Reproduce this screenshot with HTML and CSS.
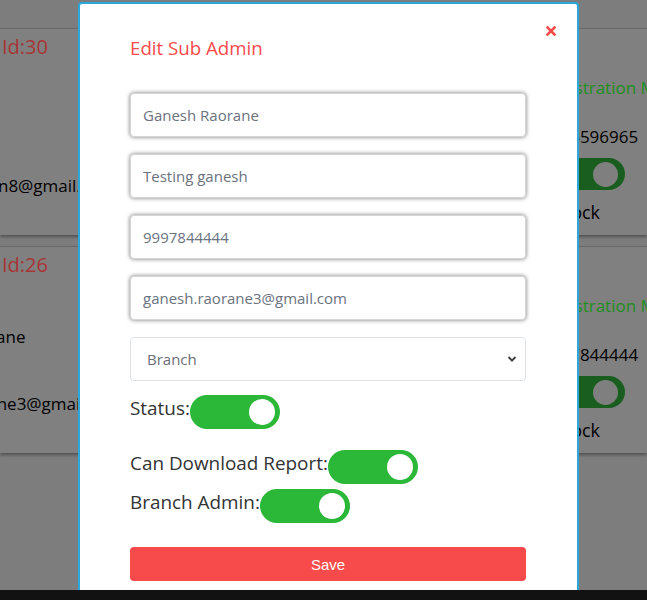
FILE: index.html
```html
<!DOCTYPE html>
<html>
<head>
<meta charset="utf-8">
<title>Edit Sub Admin</title>
<link rel="stylesheet" href="styles.css">
</head>
<body>
<div class="page">
  <div class="card">
    <div class="card-left">
      <div class="card-id">Id:30</div>
      <div class="card-line name"></div>
      <div class="card-line email"><span class="shift">chavan8@gmail.com</span></div>
    </div>
    <div class="card-right">
      <div class="card-mode">Registration Mobile</div>
      <div class="card-phone">9876596965</div>
      <div class="card-toggle"><span class="card-knob"></span></div>
      <div class="card-block">Block</div>
    </div>
  </div>
  <div class="card">
    <div class="card-left">
      <div class="card-id">Id:26</div>
      <div class="card-line name"><span class="shift2">Raorane</span></div>
      <div class="card-line email"><span class="shift3">ganesh.raorane3@gmail.com</span></div>
    </div>
    <div class="card-right">
      <div class="card-mode">Registration Mobile</div>
      <div class="card-phone">9997844444</div>
      <div class="card-toggle"><span class="card-knob"></span></div>
      <div class="card-block">Block</div>
    </div>
  </div>
</div>

<div class="modal">
  <button class="close" aria-label="Close">
    <svg width="10" height="10" viewBox="0 0 10 10"><path d="M1.5 1.5 L8.5 8.5 M8.5 1.5 L1.5 8.5" stroke="#f74a4a" stroke-width="2.6" stroke-linecap="square"/></svg>
  </button>
  <h2 class="title">Edit Sub Admin</h2>
  <form class="form">
    <input class="field" type="text" value="Ganesh Raorane">
    <input class="field" type="text" value="Testing ganesh">
    <input class="field" type="text" value="9997844444">
    <input class="field" type="text" value="ganesh.raorane3@gmail.com">
    <div class="select">
      <span>Branch</span>
      <svg width="10" height="8" viewBox="0 0 10 8"><path d="M1.5 2 L5 5.5 L8.5 2" fill="none" stroke="#444" stroke-width="2"/></svg>
    </div>
    <div class="switch-row first"><span class="label">Status:</span><span class="toggle"><span class="knob"></span></span></div>
    <div class="switch-row second"><span class="label">Can Download Report:</span><span class="toggle"><span class="knob"></span></span></div>
    <div class="switch-row third"><span class="label">Branch Admin:</span><span class="toggle"><span class="knob"></span></span></div>
    <button type="button" class="save">Save</button>
  </form>
</div>

<div class="bottom-bar"></div>
</body>
</html>
```

FILE: styles.css
```css
* { box-sizing: border-box; }
html, body { margin: 0; padding: 0; }
body {
  width: 647px;
  height: 600px;
  overflow: hidden;
  background: #7d7d7d;
  font-family: "Open Sans", "Noto Sans", sans-serif;
  position: relative;
}
.page {
  padding-top: 28px;
}
.card {
  height: 207px;
  background: #808080;
  border-top: 1px solid #6a6a6a;
  box-shadow: 0 2px 3px rgba(0,0,0,0.35);
  margin-bottom: 11px;
  display: flex;
  justify-content: space-between;
}
.card-left {
  padding-left: 2px;
  width: 300px;
  overflow: hidden;
}
.card-id {
  color: #a83535;
  font-size: 20px;
  line-height: 26px;
  margin-top: 5px;
}
.card-line {
  color: #000;
  font-size: 17px;
  line-height: 24px;
  white-space: nowrap;
}
.card-line.name { height: 24px; margin-top: 47px; }
.card-line.email { margin-top: 43px; }
.shift { margin-left: -50px; }
.shift2 { margin-left: -43px; }
.shift3 { margin-left: -110px; }
.card-right {
  width: 112px;
  padding-top: 47px;
  white-space: nowrap;
}
.card-mode {
  color: #1c8f1c;
  font-size: 17px;
  line-height: 24px;
  margin-left: 6px;
}
.card-phone {
  color: #000;
  font-size: 17px;
  line-height: 24px;
  margin-top: 25px;
  margin-left: 6px;
}
.card-toggle {
  width: 90px;
  height: 32px;
  border-radius: 16px;
  background: #1a5e1f;
  margin-top: 9px;
  margin-left: 0;
  display: flex;
  justify-content: flex-end;
  align-items: center;
  padding-right: 7px;
}
.card-knob {
  width: 25px;
  height: 25px;
  border-radius: 50%;
  background: #7f7f7f;
}
.card-block {
  color: #000;
  font-size: 18px;
  line-height: 24px;
  margin-top: 10px;
  margin-left: 20px;
}

.modal {
  position: absolute;
  left: 78px;
  top: 2px;
  width: 501px;
  height: 640px;
  background: #fff;
  border: 2px solid #2aa8dc;
  border-radius: 4px 4px 0 0;
  padding: 0 51px 0 50px;
}
.close {
  position: absolute;
  right: 20px;
  top: 21px;
  border: 0;
  background: transparent;
  padding: 0;
  width: 12px;
  height: 12px;
  display: flex;
  align-items: center;
  justify-content: center;
}
.title {
  margin: 32px 0 0 0;
  font-weight: 400;
  font-size: 18.7px;
  line-height: 24px;
  color: #f74a4a;
}
.form {
  display: flex;
  flex-direction: column;
  margin-top: 33px;
}
.field {
  width: 396px;
  height: 44px;
  border: 1px solid #d6d6d6;
  border-radius: 4px;
  box-shadow: 0 0 4px rgba(0,0,0,0.55);
  padding: 0 12px;
  font-family: "Open Sans", "Noto Sans", sans-serif;
  font-size: 15px;
  color: #6b7280;
  margin-bottom: 17px;
  outline: none;
}
.select {
  width: 396px;
  height: 44px;
  border: 1px solid #dee2e6;
  border-radius: 4px;
  padding: 0 8px 0 16px;
  display: flex;
  align-items: center;
  justify-content: space-between;
  font-size: 15px;
  color: #6b6f78;
}
.switch-row {
  display: flex;
  align-items: flex-start;
}
.switch-row.first { margin-top: 14px; }
.switch-row.second { margin-top: 21px; }
.switch-row.third { margin-top: 5px; }
.label {
  font-size: 18.9px;
  line-height: 26px;
  color: #333;
}
.toggle {
  width: 90px;
  height: 34px;
  border-radius: 17px;
  background: #2bb738;
  display: flex;
  justify-content: flex-end;
  align-items: center;
  padding-right: 5px;
}
.knob {
  width: 26px;
  height: 26px;
  border-radius: 50%;
  background: #fff;
}
.save {
  margin-top: 24px;
  width: 396px;
  height: 34px;
  border: 0;
  border-radius: 4px;
  background: #f74a4a;
  color: #fff;
  font-family: "Liberation Sans", Arial, sans-serif;
  font-size: 15px;
}
.bottom-bar {
  position: absolute;
  left: 0;
  bottom: 0;
  width: 647px;
  height: 10px;
  background: #121212;
}
```
